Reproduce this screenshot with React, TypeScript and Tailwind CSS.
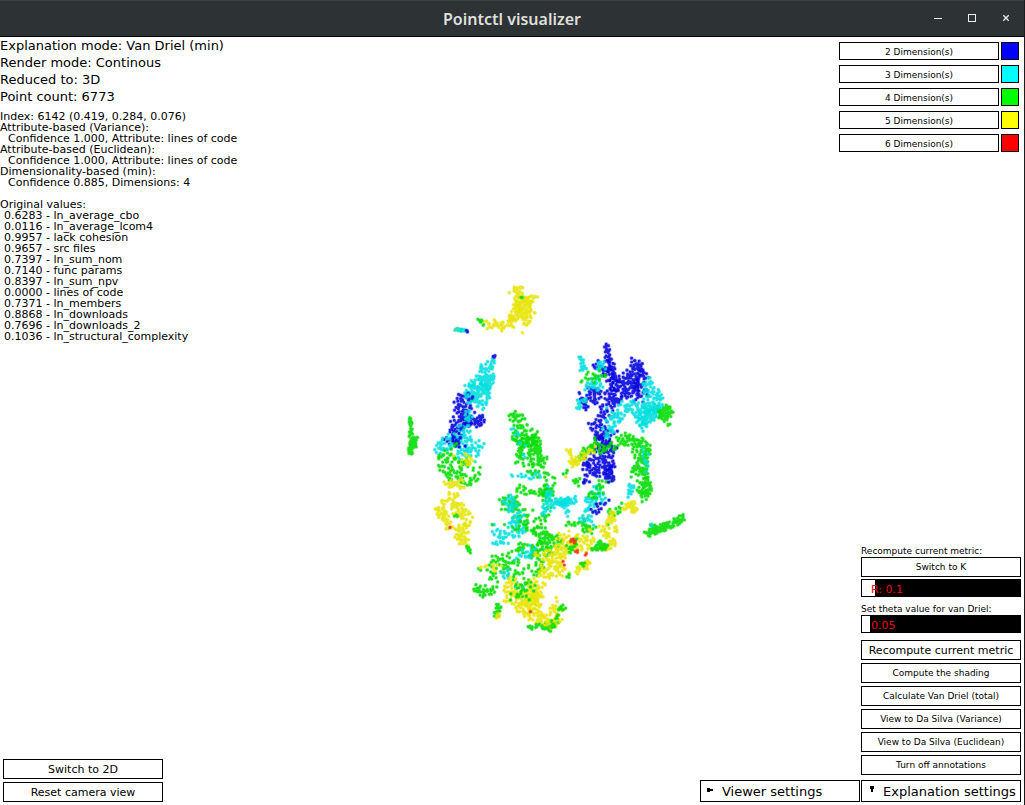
import { useState } from "react";

const BLUE = "#0404dc";
const CYAN = "#04dede";
const GREEN = "#04dc04";
const YELLOW = "#e6e408";
const RED = "#f03010";

type Cluster = [color: string, count: number, outline: number[]];

// Each cluster is a polygon (x, y pairs) that is filled with points.
const CLUSTERS: Cluster[] = [
  [YELLOW, 70, [512, 288, 516, 286, 522, 287, 523, 294, 530, 297, 536, 295, 536, 299, 532, 304, 531, 312, 522, 312, 515, 306, 516, 295, 511, 292]],
  [YELLOW, 130, [513, 304, 524, 298, 533, 302, 533, 312, 531, 321, 525, 325, 517, 321, 511, 319, 514, 312]],
  [YELLOW, 65, [486, 323, 496, 322, 505, 320, 513, 314, 518, 322, 508, 327, 500, 330, 488, 327]],
  [YELLOW, 1, [522, 332, 523, 332, 523, 333]],
  [GREEN, 8, [477, 319, 480, 319, 485, 324, 483, 326]],
  [GREEN, 2, [520, 297, 523, 298, 521, 299]],
  ["#10dcb0", 20, [455, 328, 461, 329, 461, 331, 455, 330]],
  [CYAN, 16, [460, 329, 467, 330, 466, 332, 460, 331]],
  [BLUE, 4, [466, 330, 469, 331, 467, 332]],

  [CYAN, 95, [493, 358, 494, 375, 492, 390, 482, 388, 478, 380, 480, 365]],
  [CYAN, 115, [474, 384, 491, 386, 490, 400, 482, 410, 473, 402, 467, 388]],
  [CYAN, 10, [466, 382, 474, 376, 482, 381, 468, 392]],
  [BLUE, 3, [493, 356, 495, 356, 494, 358]],
  [BLUE, 100, [463, 391, 472, 394, 473, 410, 471, 425, 460, 428, 457, 415, 454, 404]],
  [BLUE, 50, [446, 433, 450, 418, 462, 416, 472, 422, 467, 435, 460, 446, 446, 446]],
  [BLUE, 35, [472, 418, 482, 414, 485, 420, 481, 427, 472, 424, 469, 431]],
  [CYAN, 26, [466, 388, 474, 400, 472, 418, 465, 425, 464, 405]],
  [CYAN, 80, [445, 432, 456, 428, 470, 425, 472, 445, 462, 461, 448, 450, 446, 440]],
  [BLUE, 14, [446, 430, 462, 426, 466, 444, 452, 446]],
  [CYAN, 22, [433, 454, 438, 441, 446, 436, 448, 450, 436, 460]],
  [CYAN, 26, [478, 437, 484, 440, 484, 449, 476, 460, 460, 461, 460, 457]],
  [GREEN, 90, [436, 459, 452, 455, 470, 462, 485, 471, 478, 478, 470, 486, 455, 482, 438, 474]],
  [GREEN, 16, [436, 455, 455, 444, 476, 456, 452, 468]],
  [YELLOW, 16, [450, 459, 464, 453, 480, 460, 472, 468, 456, 470]],
  [YELLOW, 36, [438, 475, 450, 480, 461, 478, 463, 488, 445, 486]],
  [YELLOW, 22, [441, 503, 444, 496, 452, 492, 459, 496, 450, 501, 443, 508]],
  [YELLOW, 60, [452, 503, 460, 500, 469, 510, 473, 521, 468, 526, 462, 518, 452, 510]],
  [YELLOW, 60, [434, 508, 446, 507, 448, 520, 456, 526, 452, 530, 445, 526]],
  [YELLOW, 60, [456, 527, 466, 523, 468, 540, 469, 547, 463, 545, 455, 537]],
  [GREEN, 10, [466, 546, 469, 547, 471, 555, 468, 555]],
  [GREEN, 4, [453, 516, 457, 515, 458, 519]],
  [RED, 1, [449, 527, 450, 527, 450, 528]],

  [GREEN, 34, [408, 417, 411, 416, 413, 432, 411, 437, 409, 436, 410, 425]],
  [GREEN, 85, [411, 438, 418, 437, 416, 447, 412, 454, 408, 453, 409, 444]],

  [GREEN, 110, [508, 404, 514, 411, 525, 412, 527, 425, 536, 432, 540, 446, 520, 448, 514, 438, 512, 422]],
  [GREEN, 125, [514, 438, 538, 434, 542, 450, 548, 468, 543, 472, 530, 460, 526, 467, 514, 464, 518, 453]],
  [CYAN, 18, [510, 476, 514, 472, 534, 471, 545, 477, 528, 479]],
  [CYAN, 10, [508, 411, 516, 420, 530, 454, 523, 458]],
  [GREEN, 22, [528, 462, 545, 465, 555, 480, 538, 480, 526, 474]],
  [GREEN, 48, [512, 493, 518, 485, 540, 490, 556, 482, 548, 496, 534, 497]],
  [GREEN, 62, [501, 510, 502, 495, 514, 496, 523, 507, 535, 514, 532, 526, 513, 519, 509, 511]],
  [CYAN, 44, [503, 500, 512, 496, 522, 506, 525, 520, 515, 520, 505, 509]],
  [CYAN, 70, [491, 537, 492, 524, 505, 531, 513, 518, 528, 521, 526, 532, 506, 543, 496, 545]],
  [GREEN, 26, [490, 523, 508, 526, 536, 519, 538, 535, 519, 531]],
  [GREEN, 70, [508, 553, 515, 545, 528, 543, 540, 542, 552, 555, 535, 565, 528, 552]],
  [CYAN, 22, [515, 558, 532, 544, 535, 554, 518, 560]],
  [GREEN, 90, [477, 568, 490, 565, 493, 553, 510, 557, 532, 565, 548, 561, 543, 575, 520, 590, 500, 585, 488, 580]],
  [YELLOW, 14, [478, 568, 493, 563, 506, 565, 492, 575]],
  [CYAN, 14, [495, 576, 507, 570, 528, 592, 510, 584]],
  [GREEN, 40, [474, 597, 475, 581, 481, 590, 497, 583, 494, 595, 480, 597]],
  [YELLOW, 105, [503, 590, 510, 573, 525, 590, 540, 592, 535, 606, 516, 615, 500, 602]],
  [YELLOW, 95, [518, 602, 535, 588, 541, 600, 543, 614, 558, 621, 534, 625, 520, 615]],
  [YELLOW, 50, [525, 580, 540, 575, 545, 587, 539, 610, 527, 609]],
  [GREEN, 30, [508, 590, 520, 578, 538, 582, 528, 602, 510, 598]],
  [GREEN, 28, [493, 617, 496, 604, 502, 605, 498, 616]],
  [YELLOW, 8, [494, 618, 498, 613, 500, 618]],
  [GREEN, 48, [527, 627, 540, 624, 559, 622, 551, 632, 540, 627, 530, 630]],
  [YELLOW, 48, [550, 609, 557, 597, 563, 605, 560, 621, 550, 629, 540, 620]],
  [GREEN, 20, [557, 603, 564, 605, 564, 612, 560, 621, 545, 628, 555, 615]],

  [GREEN, 70, [537, 530, 556, 531, 562, 540, 558, 549, 545, 549, 537, 543]],
  [GREEN, 50, [542, 487, 550, 480, 556, 501, 550, 514, 540, 538, 535, 528, 544, 510]],
  [CYAN, 74, [543, 487, 558, 486, 550, 500, 571, 498, 568, 518, 559, 504, 549, 510, 542, 525]],
  [CYAN, 28, [558, 502, 575, 497, 580, 482, 578, 498, 570, 509]],
  [GREEN, 8, [573, 480, 580, 478, 579, 489]],
  [GREEN, 36, [566, 523, 584, 520, 598, 531, 588, 533, 580, 526, 566, 528]],
  [CYAN, 76, [585, 497, 600, 482, 604, 500, 593, 508, 594, 525, 580, 520, 584, 506]],
  [GREEN, 22, [583, 495, 594, 490, 600, 475, 612, 480, 594, 500]],

  [BLUE, 80, [604, 344, 607, 346, 610, 350, 613, 365, 620, 378, 619, 391, 611, 382, 607, 362]],
  [BLUE, 36, [595, 360, 610, 362, 616, 383, 611, 390, 603, 370, 595, 370]],
  [BLUE, 140, [633, 359, 642, 363, 641, 377, 637, 392, 625, 399, 620, 389, 624, 374, 631, 370]],
  [BLUE, 44, [640, 370, 649, 377, 648, 391, 641, 403, 634, 402, 636, 391]],
  [BLUE, 110, [583, 397, 593, 386, 605, 393, 618, 388, 621, 404, 608, 411, 596, 403, 586, 410]],
  [BLUE, 14, [578, 391, 587, 400, 587, 407, 581, 402]],
  [BLUE, 72, [588, 425, 602, 411, 610, 411, 608, 430, 618, 432, 605, 446, 597, 439, 590, 430]],
  [BLUE, 150, [590, 458, 599, 435, 612, 440, 617, 455, 613, 471, 600, 475, 590, 482, 584, 480]],
  [BLUE, 18, [583, 456, 590, 456, 590, 484, 583, 483]],
  [BLUE, 34, [603, 470, 612, 465, 615, 480, 607, 484]],
  [BLUE, 14, [588, 512, 595, 503, 612, 500, 601, 510, 593, 524]],
  [CYAN, 28, [578, 355, 582, 356, 587, 370, 580, 371, 581, 362]],
  [CYAN, 40, [583, 385, 596, 376, 602, 377, 603, 393, 592, 388, 584, 391]],
  [CYAN, 16, [574, 400, 581, 402, 590, 391, 578, 411]],
  [CYAN, 14, [593, 364, 605, 360, 607, 371, 597, 371]],
  [GREEN, 20, [580, 382, 588, 368, 593, 374, 605, 370, 608, 379, 600, 377, 590, 385]],
  [CYAN, 100, [643, 383, 652, 377, 661, 394, 664, 405, 656, 417, 642, 409, 645, 399]],
  [CYAN, 100, [640, 431, 642, 412, 658, 405, 659, 416, 650, 422, 640, 431, 633, 417]],
  [CYAN, 90, [606, 422, 617, 403, 635, 400, 650, 411, 641, 425, 630, 413, 619, 424]],
  [CYAN, 20, [606, 405, 618, 412, 626, 427, 609, 426]],
  [CYAN, 22, [603, 430, 615, 425, 617, 436, 605, 438]],
  [GREEN, 65, [660, 412, 668, 405, 673, 413, 665, 420, 657, 419]],
  [GREEN, 3, [668, 422, 671, 425, 668, 426]],
  [GREEN, 40, [615, 440, 622, 434, 642, 438, 632, 444, 618, 448]],
  [GREEN, 34, [588, 448, 596, 434, 600, 442, 614, 445, 617, 451, 602, 453]],
  [GREEN, 135, [633, 444, 642, 440, 650, 445, 648, 465, 648, 480, 641, 474, 629, 475, 636, 463]],
  [GREEN, 70, [637, 480, 649, 480, 651, 489, 645, 501, 639, 496]],
  [CYAN, 10, [643, 447, 649, 454, 647, 473, 642, 466]],
  [CYAN, 18, [627, 484, 634, 483, 634, 492, 628, 500]],
  [GREEN, 15, [610, 512, 624, 501, 619, 514, 608, 523]],
  [GREEN, 32, [576, 460, 583, 451, 594, 445, 595, 451, 580, 459]],
  [YELLOW, 32, [566, 447, 570, 450, 577, 461, 569, 471, 562, 477, 570, 463]],
  [YELLOW, 28, [573, 460, 585, 452, 598, 446, 592, 453, 578, 466]],
  [GREEN, 5, [563, 474, 568, 469, 566, 476]],
  [YELLOW, 50, [622, 511, 625, 504, 634, 501, 638, 511, 632, 513, 630, 508]],
  [YELLOW, 34, [605, 523, 610, 510, 615, 513, 615, 522]],
  [YELLOW, 28, [600, 527, 607, 525, 611, 537, 619, 521, 616, 535, 605, 539]],
  [YELLOW, 28, [614, 537, 617, 542, 608, 550, 596, 550, 610, 545]],
  [YELLOW, 80, [556, 540, 563, 531, 580, 536, 593, 530, 593, 548, 581, 554, 570, 545, 557, 553]],
  [YELLOW, 110, [540, 573, 545, 564, 556, 550, 572, 545, 562, 564, 564, 576, 550, 577]],
  [YELLOW, 40, [565, 575, 575, 573, 582, 563, 590, 561, 587, 568, 572, 575]],
  [GREEN, 50, [588, 552, 600, 541, 608, 545, 605, 550, 595, 550]],
  [GREEN, 14, [560, 550, 580, 538, 575, 553, 566, 556]],
  [GREEN, 5, [580, 563, 587, 562, 584, 566]],
  [GREEN, 5, [566, 577, 570, 574, 569, 578]],
  [YELLOW, 28, [535, 552, 556, 547, 555, 568, 538, 565]],
  [RED, 7, [571, 539, 576, 537, 575, 547, 571, 548]],
  [RED, 3, [575, 550, 580, 552, 576, 554]],
  [RED, 2, [585, 554, 588, 553, 587, 556]],
  [RED, 2, [562, 561, 565, 561, 564, 567]],
  [RED, 1, [530, 611, 531, 611, 531, 612]],
  [GREEN, 150, [645, 535, 651, 531, 652, 526, 658, 527, 670, 523, 683, 516, 685, 518, 673, 526, 655, 533, 648, 536]],
  [CYAN, 2, [651, 524, 653, 525, 652, 527]],
];

function makeRandom(seed: number) {
  let state = seed;
  return () => {
    state = (state * 1664525 + 1013904223) % 4294967296;
    return state / 4294967296;
  };
}

function inside(x: number, y: number, outline: number[]) {
  let hit = false;
  const n = outline.length / 2;
  for (let i = 0, j = n - 1; i < n; j = i++) {
    const xi = outline[i * 2];
    const yi = outline[i * 2 + 1];
    const xj = outline[j * 2];
    const yj = outline[j * 2 + 1];
    if (yi > y !== yj > y && x < ((xj - xi) * (y - yi)) / (yj - yi) + xi) hit = !hit;
  }
  return hit;
}

// Some points follow a neighbour, which gives small clumps; larger
// clusters also let their points stray a little over the outline.
function scatter([, count, outline]: Cluster, seed: number) {
  const random = makeRandom(seed * 7919 + 17);
  const xs = outline.filter((_, i) => i % 2 === 0);
  const ys = outline.filter((_, i) => i % 2 === 1);
  const left = Math.min(...xs);
  const top = Math.min(...ys);
  const width = Math.max(...xs) - left;
  const height = Math.max(...ys) - top;
  const stray = Math.min(width, height) > 12 ? 5 : 1;
  let path = "";
  let px = left;
  let py = top;
  let placed = 0;
  for (let tries = 0; placed < count && tries < 8000; tries++) {
    const follow = placed > 0 && random() < 0.25;
    const x = follow ? px + (random() - 0.5) * 8 : left + random() * width;
    const y = follow ? py + (random() - 0.5) * 8 : top + random() * height;
    if (!inside(x, y, outline)) continue;
    px = x;
    py = y;
    const dx = (random() - 0.5) * stray;
    const dy = (random() - 0.5) * stray;
    path += `M${(x + dx).toFixed(1)} ${(y + dy).toFixed(1)}h0`;
    placed++;
  }
  return path;
}

const PATHS = CLUSTERS.map((cluster, i) => ({ color: cluster[0], d: scatter(cluster, i + 1) }));

function PointCloud() {
  return (
    <svg
      className="absolute inset-0 h-full w-full"
      viewBox="0 37 1024 768"
      role="img"
      aria-label="Projected point cloud"
      fill="none"
      strokeLinecap="round"
    >
      {PATHS.map(({ color, d }, i) => (
        <g key={i} stroke={color}>
          <path d={d} strokeWidth="4.4" opacity="0.3" />
          <path d={d} strokeWidth="2.9" opacity="0.85" />
        </g>
      ))}
    </svg>
  );
}

const STATUS = [
  "Explanation mode: Van Driel (min)",
  "Render mode: Continous",
  "Reduced to: 3D",
  "Point count: 6773",
];

const VALUES = [
  ["0.6283", "ln_average_cbo"],
  ["0.0116", "ln_average_lcom4"],
  ["0.9957", "lack cohesion"],
  ["0.9657", "src files"],
  ["0.7397", "ln_sum_nom"],
  ["0.7140", "func params"],
  ["0.8397", "ln_sum_npv"],
  ["0.0000", "lines of code"],
  ["0.7371", "ln_members"],
  ["0.8868", "ln_downloads"],
  ["0.7696", "ln_downloads_2"],
  ["0.1036", "ln_structural_complexity"],
];

const LEGEND = [
  ["2 Dimension(s)", "bg-[#0000ff]"],
  ["3 Dimension(s)", "bg-[#00ffff]"],
  ["4 Dimension(s)", "bg-[#00ff00]"],
  ["5 Dimension(s)", "bg-[#ffff00]"],
  ["6 Dimension(s)", "bg-[#ff0000]"],
];

const ACTIONS = [
  "Compute the shading",
  "Calculate Van Driel (total)",
  "View to Da Silva (Variance)",
  "View to Da Silva (Euclidean)",
  "Turn off annotations",
];

const BUTTON = "flex h-5 w-40 items-center justify-center border border-black bg-white whitespace-nowrap";

function TitleBar() {
  return (
    <header className="grid h-[37px] shrink-0 grid-cols-[1fr_auto_1fr] items-center border-t border-b border-t-[#3c4143] border-b-black bg-[#2d3234]">
      <h1 className="col-start-2 font-['Noto_Sans','Open_Sans',sans-serif] text-base font-semibold text-[#dfdfdb]">
        Pointctl visualizer
      </h1>
      <div className="flex justify-end gap-4 pr-[9px] text-[#eeeeec]">
        <button aria-label="Minimize" className="flex size-[18px] items-center justify-center">
          <svg width="10" height="10" viewBox="0 0 10 10" shapeRendering="crispEdges">
            <path d="M1 4h8v1H1z" fill="currentColor" />
          </svg>
        </button>
        <button aria-label="Maximize" className="flex size-[18px] items-center justify-center">
          <svg width="10" height="10" viewBox="0 0 10 10" shapeRendering="crispEdges">
            <path d="M1.5 0.5h7v7h-7z" fill="none" stroke="currentColor" />
          </svg>
        </button>
        <button aria-label="Close" className="flex size-[18px] items-center justify-center">
          <svg width="10" height="10" viewBox="0 0 10 10">
            <path d="M2.3 1.3l5.4 5.4M7.7 1.3l-5.4 5.4" stroke="currentColor" strokeWidth="1.3" />
          </svg>
        </button>
      </div>
    </header>
  );
}

function Slider({ id, prefix, max, initial }: { id: string; prefix: string; max: number; initial: number }) {
  const [value, setValue] = useState(initial);
  const percent = (value / max) * 100;
  return (
    <div className="relative h-[18px] w-40">
      <input
        id={id}
        type="range"
        min={0}
        max={max}
        step={0.01}
        value={value}
        onChange={(event) => setValue(Number(event.target.value))}
        className="block h-full w-full appearance-none border border-black bg-black [&::-webkit-slider-thumb]:appearance-none [&::-webkit-slider-thumb]:opacity-0"
        style={{ background: `linear-gradient(to right, #fff ${percent}%, #000 ${percent}%)` }}
      />
      <output htmlFor={id} className="pointer-events-none absolute inset-y-0 left-2.5 pt-0.5 text-[11px] leading-[18px] text-[#f00000]">
        {prefix}
        {value}
      </output>
    </div>
  );
}

export default function App() {
  return (
    <div className="flex min-h-screen flex-col border-r border-[#1c1c1c] bg-white font-['DejaVu_Sans',sans-serif] text-black">
      <TitleBar />
      <main className="relative flex flex-1 flex-col justify-between">
        <PointCloud />
        <div className="relative flex items-start justify-between">
          <section>
            <div className="text-[13px] leading-[17px]">
              {STATUS.map((line) => (
                <p key={line}>{line}</p>
              ))}
            </div>
            <div className="mt-1.5 text-[11px] leading-[11px]">
              <p>Index: 6142 (0.419, 0.284, 0.076)</p>
              <p>Attribute-based (Variance):</p>
              <p className="pl-2">Confidence 1.000, Attribute: lines of code</p>
              <p>Attribute-based (Euclidean):</p>
              <p className="pl-2">Confidence 1.000, Attribute: lines of code</p>
              <p>Dimensionality-based (min):</p>
              <p className="pl-2">Confidence 0.885, Dimensions: 4</p>
              <h2 className="mt-[11px]">Original values:</h2>
              <ul className="pl-1">
                {VALUES.map(([value, name]) => (
                  <li key={name}>
                    {value} - {name}
                  </li>
                ))}
              </ul>
            </div>
          </section>
          <ul className="flex flex-col gap-[5px] pt-[5px] pr-[5px]">
            {LEGEND.map(([label, color]) => (
              <li key={label} className="flex gap-0.5">
                <button className="h-[18px] w-40 border border-black bg-white pt-0.5 text-[9px] leading-[14px]">{label}</button>
                <span className={`size-[18px] border border-black ${color}`} />
              </li>
            ))}
          </ul>
        </div>

        <div className="relative flex items-end justify-between pr-[3px] pb-[3px] pl-[3px]">
          <div className="flex flex-col gap-[3px] text-[11px]">
            <button className={`${BUTTON} pt-0.5`}>Switch to 2D</button>
            <button className={`${BUTTON} pt-0.5`}>Reset camera view</button>
          </div>
          <div className="flex items-end gap-px">
            <button className="flex h-[22px] w-40 items-center gap-2 border border-black bg-white pl-1.5 text-[13px] whitespace-nowrap">
              <svg width="7" height="6" viewBox="0 0 7 6" shapeRendering="crispEdges" aria-hidden="true" className="shrink-0">
                <path d="M0 0h3v1h3v2H3v1H0z" />
              </svg>
              <span className="pt-0.5">Viewer settings</span>
            </button>
            <div className="flex flex-col">
              <label htmlFor="radius" className="text-[9px] leading-3">
                Recompute current metric:
              </label>
              <button className={`${BUTTON} pt-0.5 text-[9px]`}>Switch to K</button>
              <div className="mt-0.5">
                <Slider id="radius" prefix="R: " max={1.2} initial={0.1} />
              </div>
              <label htmlFor="theta" className="mt-1.5 text-[9px] leading-3">
                Set theta value for van Driel:
              </label>
              <Slider id="theta" prefix="" max={1} initial={0.05} />
              <div className="mt-[7px] flex flex-col gap-[3px] text-[9px]">
                <button className={`${BUTTON} pt-0.5 text-[11px]`}>Recompute current metric</button>
                {ACTIONS.map((label) => (
                  <button key={label} className={`${BUTTON} pt-0.5`}>
                    {label}
                  </button>
                ))}
              </div>
              <button className="mt-[5px] flex h-[22px] w-40 items-center gap-2 border border-black bg-white pl-2 text-[13px] whitespace-nowrap">
                <svg width="5" height="10" viewBox="0 0 5 10" shapeRendering="crispEdges" aria-hidden="true" className="shrink-0">
                  <path d="M0 0h4v3H3v3H1V3H0z" />
                </svg>
                <span className="pt-0.5">Explanation settings</span>
              </button>
            </div>
          </div>
        </div>
      </main>
    </div>
  );
}
